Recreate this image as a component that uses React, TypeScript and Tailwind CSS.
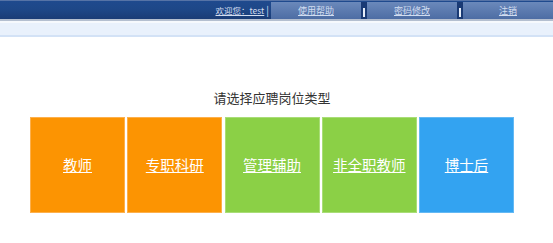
const font = "font-['Microsoft_YaHei','Noto_Sans_CJK_SC',sans-serif]";

const navItems = ['使用帮助', '密码修改', '注销'];

const posts = [
    { name: '教师', color: 'bg-[#fc9402] border-[#fdb04c]' },
    { name: '专职科研', color: 'bg-[#fc9402] border-[#fdb04c]' },
    { name: '管理辅助', color: 'bg-[#8bd046] border-[#a9dd77]' },
    { name: '非全职教师', color: 'bg-[#8bd046] border-[#a9dd77]' },
    { name: '博士后', color: 'bg-[#33a3f1] border-[#64b9f4]' },
];

function Separator() {
    return (
        <div className="w-[6px] h-[17px] bg-[#1a3a74] flex items-end justify-center pb-[2px]">
            <div className="w-[2px] h-[9px] bg-[#e6edf8]"></div>
        </div>
    );
}

export default function App() {
    return (
        <div className={`min-h-[243px] bg-white ${font}`}>
            {/* top bar */}
            <div className="h-[19px] border-t border-[#5673a6] bg-gradient-to-b from-[#1f4a8e] via-[#1e4787] to-[#1a3c76] flex items-center justify-end">
                <a className="text-[8.5px] text-[#d4def0] underline leading-none mr-[2px]">欢迎您：test</a>
                <span className="text-[10px] text-[#d4def0] leading-none mr-[2px]">|</span>
                {navItems.map((item, i) => (
                    <div key={item} className="flex items-end h-full">
                        {i > 0 && <Separator />}
                        <div className="w-[90px] h-[17px] bg-gradient-to-b from-[#6b89bb] to-[#4d6da4] flex items-center justify-center">
                            <a className="text-[9px] text-[#d2ddf0] underline leading-none">{item}</a>
                        </div>
                    </div>
                ))}
            </div>
            {/* sub bar */}
            <div className="h-[2px] bg-[#b4bfd0]"></div>
            <div className="h-[16px] border-t-2 border-[#f6f9fd] bg-[#e9f1fc] border-b-2 border-b-[#d3e2f6]"></div>

            {/* content */}
            <div className="pt-[52px] pl-[30px]">
                <div className="w-[484px] text-center text-[13px] text-[#333] leading-[18px]">请选择应聘岗位类型</div>
                <div className="flex gap-[2.25px] mt-[10px]">
                    {posts.map((p) => (
                        <div key={p.name} className={`w-[95px] h-[96px] border flex items-center justify-center ${p.color}`}>
                            <a className="text-[14.5px] text-white underline leading-none">{p.name}</a>
                        </div>
                    ))}
                </div>
            </div>
        </div>
    );
}
